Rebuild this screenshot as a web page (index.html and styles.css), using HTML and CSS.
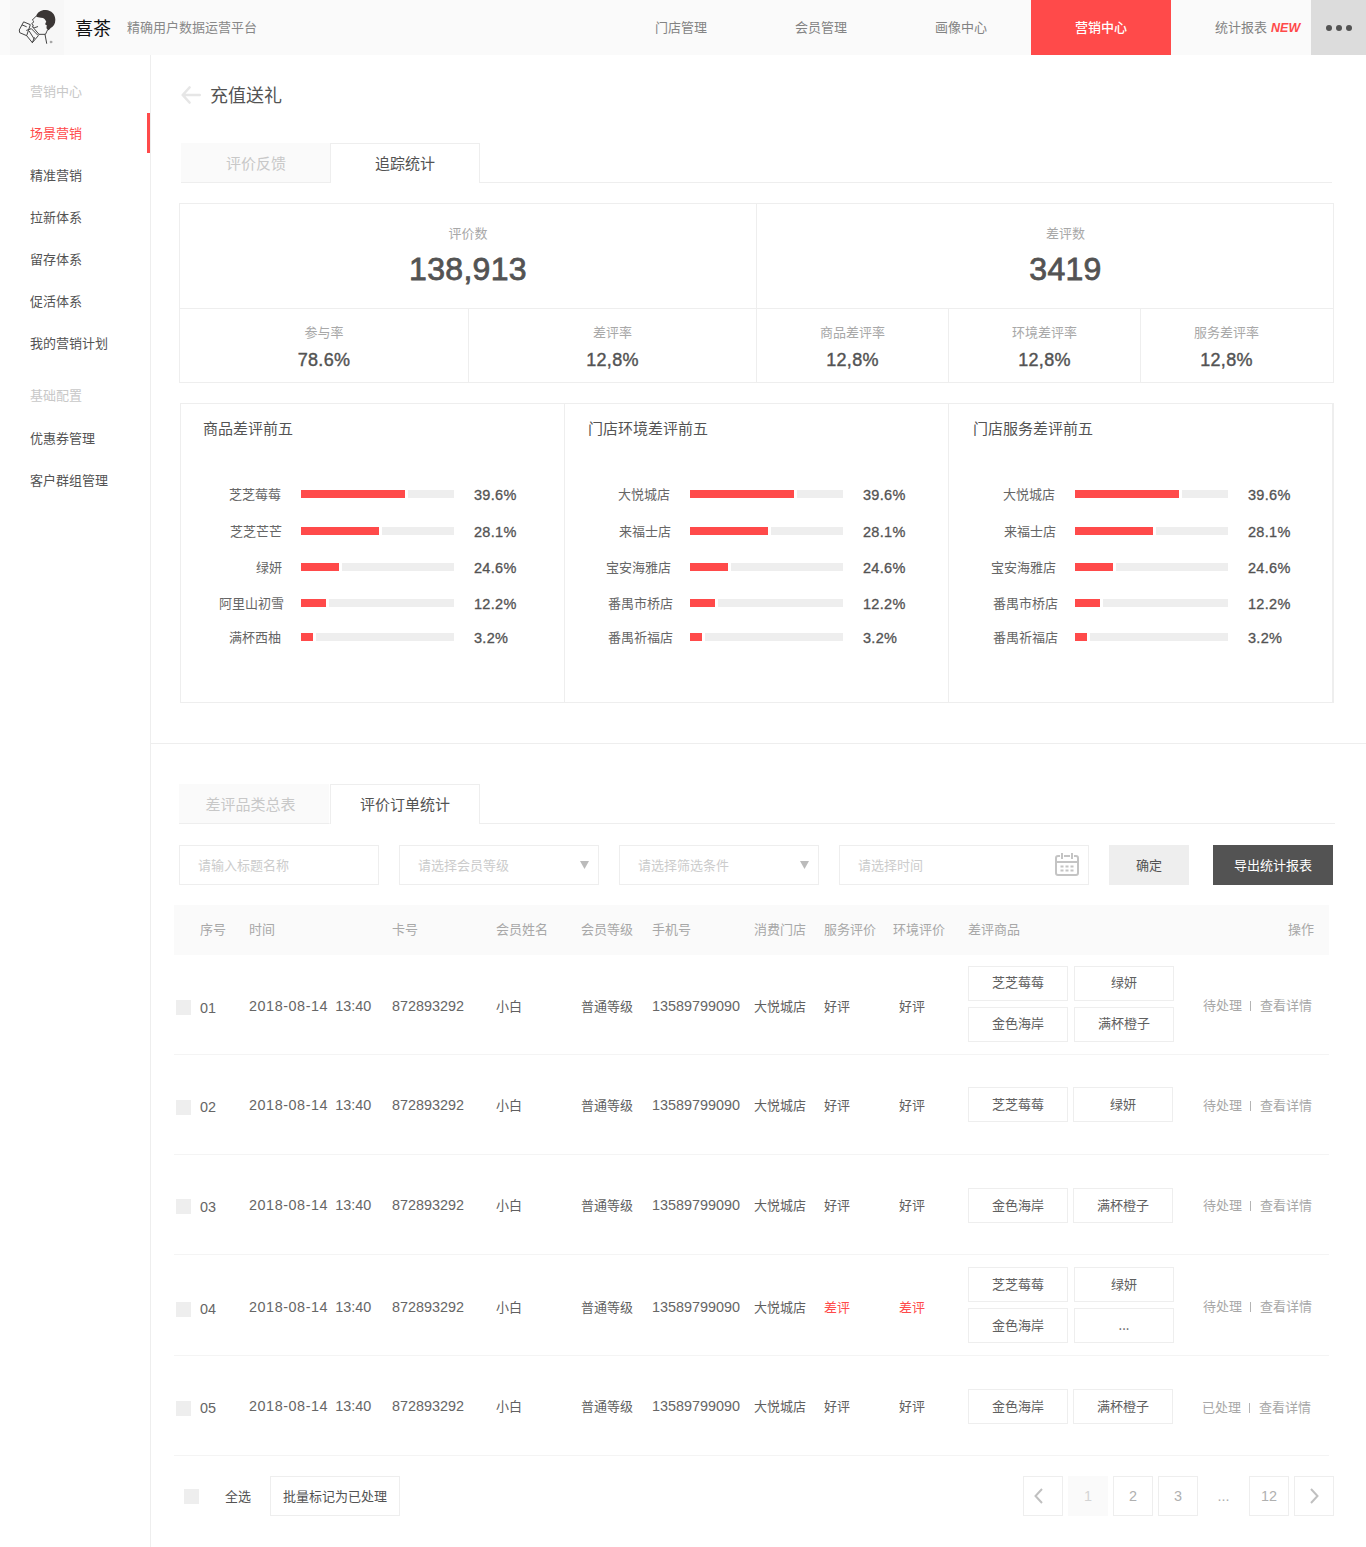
FILE: index.html
```html
<!DOCTYPE html>
<html lang="zh-CN">
<head>
<meta charset="utf-8">
<title>喜茶 精确用户数据运营平台</title>
<link rel="stylesheet" href="styles.css">
</head>
<body>
<header class="topbar">
  <div class="logo">
    <svg viewBox="0 0 162 162" width="54" height="54" fill="none" stroke="#444" stroke-width="3" stroke-linejoin="round" stroke-linecap="round">
      <path d="M78 49C82 36 94 29 108 30C124 31 136 43 136 59C136 72 130 80 122 84L116 91C109 89 108 82 111 76C106 76 104 70 109 66C107 59 102 53 93 53C87 53 82 52 78 49Z" fill="#3b3635" stroke="none"/>
      <path d="M78 49L67 60L72 65L65 71L70 75L67 80L74 83L83 80M112 91C108 98 108 103 105 103H87M105 103L110 130M87 103L69 82M42 66L61 74L50 107L29 98L28 91ZM37 75L49 80M50 107L67 128L85 107L64 86L50 91M58 94L72 116M67 128L73 113"/>
      <circle cx="123" cy="126" r="3" fill="#888" stroke="#aaa" stroke-width="2"/>
    </svg>
  </div>
  <h1 class="brand">喜茶</h1>
  <span class="slogan">精确用户数据运营平台</span>
  <nav class="nav">
    <a>门店管理</a>
    <a>会员管理</a>
    <a>画像中心</a>
    <a class="active">营销中心</a>
    <a class="report">统计报表<em>NEW</em></a>
  </nav>
  <div class="more"><i></i><i></i><i></i></div>
</header>

<div class="layout">
  <aside class="sidebar">
    <div class="heading">营销中心</div>
    <a class="active">场景营销</a>
    <a>精准营销</a>
    <a>拉新体系</a>
    <a>留存体系</a>
    <a>促活体系</a>
    <a>我的营销计划</a>
    <div class="heading second">基础配置</div>
    <a>优惠券管理</a>
    <a>客户群组管理</a>
  </aside>

  <main class="main">
    <section class="overview">
      <div class="page-title">
        <svg width="20" height="18" viewBox="0 0 20 18" fill="none" stroke="#e6e6e6" stroke-width="2.6" stroke-linecap="round" stroke-linejoin="round"><path d="M8.5 1.500L1.700 9L8.500 16.500M2 9H18.700"/></svg>
        <h2>充值送礼</h2>
      </div>

      <div class="tabs">
        <div class="tab">评价反馈</div>
        <div class="tab current">追踪统计</div>
      </div>

      <div class="stats">
        <div class="stats-top">
          <div class="stat"><label>评价数</label><b>138,913</b></div>
          <div class="stat"><label>差评数</label><b>3419</b></div>
        </div>
        <div class="stats-bottom">
          <div class="stat"><label>参与率</label><b>78.6%</b></div>
          <div class="stat"><label>差评率</label><b>12,8%</b></div>
          <div class="stat"><label>商品差评率</label><b>12,8%</b></div>
          <div class="stat"><label>环境差评率</label><b>12,8%</b></div>
          <div class="stat last"><label>服务差评率</label><b>12,8%</b></div>
        </div>
      </div>

      <div class="ranks">
        <div class="rank products">
          <h3>商品差评前五</h3>
          <div class="bars">
            <div class="bar"><span>芝芝莓莓</span><div class="track"><i style="width:104px"></i></div><b>39.6%</b></div>
            <div class="bar"><span>芝芝芒芒</span><div class="track"><i style="width:78px"></i></div><b>28.1%</b></div>
            <div class="bar"><span>绿妍</span><div class="track"><i style="width:38px"></i></div><b>24.6%</b></div>
            <div class="bar"><span>阿里山初雪</span><div class="track"><i style="width:25px"></i></div><b>12.2%</b></div>
            <div class="bar"><span>满杯西柚</span><div class="track"><i style="width:12px"></i></div><b>3.2%</b></div>
          </div>
        </div>
        <div class="rank">
          <h3>门店环境差评前五</h3>
          <div class="bars">
            <div class="bar"><span>大悦城店</span><div class="track"><i style="width:104px"></i></div><b>39.6%</b></div>
            <div class="bar"><span>来福士店</span><div class="track"><i style="width:78px"></i></div><b>28.1%</b></div>
            <div class="bar"><span>宝安海雅店</span><div class="track"><i style="width:38px"></i></div><b>24.6%</b></div>
            <div class="bar"><span>番禺市桥店</span><div class="track"><i style="width:25px"></i></div><b>12.2%</b></div>
            <div class="bar"><span>番禺祈福店</span><div class="track"><i style="width:12px"></i></div><b>3.2%</b></div>
          </div>
        </div>
        <div class="rank services">
          <h3>门店服务差评前五</h3>
          <div class="bars">
            <div class="bar"><span>大悦城店</span><div class="track"><i style="width:104px"></i></div><b>39.6%</b></div>
            <div class="bar"><span>来福士店</span><div class="track"><i style="width:78px"></i></div><b>28.1%</b></div>
            <div class="bar"><span>宝安海雅店</span><div class="track"><i style="width:38px"></i></div><b>24.6%</b></div>
            <div class="bar"><span>番禺市桥店</span><div class="track"><i style="width:25px"></i></div><b>12.2%</b></div>
            <div class="bar"><span>番禺祈福店</span><div class="track"><i style="width:12px"></i></div><b>3.2%</b></div>
          </div>
        </div>
      </div>
    </section>

    <section class="orders">
      <div class="tabs wide">
        <div class="tab">差评品类总表</div>
        <div class="tab current">评价订单统计</div>
      </div>

      <div class="filters">
        <div class="field">请输入标题名称</div>
        <div class="field">请选择会员等级<svg width="9" height="8" viewBox="0 0 9 8"><path d="M0 0H9L4.5 8Z" fill="#bbb"/></svg></div>
        <div class="field">请选择筛选条件<svg width="9" height="8" viewBox="0 0 9 8"><path d="M0 0H9L4.5 8Z" fill="#bbb"/></svg></div>
        <div class="field date">请选择时间
          <svg width="24" height="24" viewBox="0 0 24 24" fill="none" stroke="#c4c4c4" stroke-width="2"><path d="M5 3H3Q1 3 1 5V20Q1 22 3 22H21Q23 22 23 20V5Q23 3 21 3H19M9 3H15M1 9H23M7 0V6M17 0V6"/><path d="M5.500 13.500H8.500M10.500 13.500H13.500M15.500 13.500H18.500M5.500 17.500H8.500M10.500 17.500H13.500M15.500 17.500H18.500"/></svg>
        </div>
        <button class="confirm">确定</button>
        <button class="export">导出统计报表</button>
      </div>

      <div class="table">
        <div class="row head">
          <span></span><span>序号</span><span>时间</span><span>卡号</span><span>会员姓名</span><span>会员等级</span><span>手机号</span><span>消费门店</span><span>服务评价</span><span>环境评价</span><span>差评商品</span><span class="op">操作</span>
        </div>
        <div class="row r1">
          <i class="check"></i><span class="no">01</span><span class="num"><time>2018-08-14</time>13:40</span><span class="num">872893292</span><span>小白</span><span>普通等级</span><span class="num">13589799090</span><span>大悦城店</span><span>好评</span><span class="env">好评</span>
          <div class="tags"><em>芝芝莓莓</em><em>绿妍</em><em>金色海岸</em><em>满杯橙子</em></div>
          <span class="op"><a>待处理</a><s></s><a>查看详情</a></span>
        </div>
        <div class="row r2">
          <i class="check"></i><span class="no">02</span><span class="num"><time>2018-08-14</time>13:40</span><span class="num">872893292</span><span>小白</span><span>普通等级</span><span class="num">13589799090</span><span>大悦城店</span><span>好评</span><span class="env">好评</span>
          <div class="tags single"><em>芝芝莓莓</em><em>绿妍</em></div>
          <span class="op"><a>待处理</a><s></s><a>查看详情</a></span>
        </div>
        <div class="row r3">
          <i class="check"></i><span class="no">03</span><span class="num"><time>2018-08-14</time>13:40</span><span class="num">872893292</span><span>小白</span><span>普通等级</span><span class="num">13589799090</span><span>大悦城店</span><span>好评</span><span class="env">好评</span>
          <div class="tags single"><em>金色海岸</em><em>满杯橙子</em></div>
          <span class="op"><a>待处理</a><s></s><a>查看详情</a></span>
        </div>
        <div class="row r4">
          <i class="check"></i><span class="no">04</span><span class="num"><time>2018-08-14</time>13:40</span><span class="num">872893292</span><span>小白</span><span>普通等级</span><span class="num">13589799090</span><span>大悦城店</span><span class="bad">差评</span><span class="env bad">差评</span>
          <div class="tags"><em>芝芝莓莓</em><em>绿妍</em><em>金色海岸</em><em>...</em></div>
          <span class="op"><a>待处理</a><s></s><a>查看详情</a></span>
        </div>
        <div class="row r5">
          <i class="check"></i><span class="no">05</span><span class="num"><time>2018-08-14</time>13:40</span><span class="num">872893292</span><span>小白</span><span>普通等级</span><span class="num">13589799090</span><span>大悦城店</span><span>好评</span><span class="env">好评</span>
          <div class="tags single"><em>金色海岸</em><em>满杯橙子</em></div>
          <span class="op"><a>已处理</a><s></s><a>查看详情</a></span>
        </div>
      </div>

      <div class="footer">
        <i class="check"></i>
        <span class="all">全选</span>
        <button class="batch">批量标记为已处理</button>
        <div class="pager">
          <a class="prev"><svg width="9" height="16" viewBox="0 0 9 16" fill="none" stroke="#c0c0c0" stroke-width="2"><path d="M8 1L1.500 8L8 15"/></svg></a>
          <a class="on">1</a><a>2</a><a>3</a><span>...</span><a>12</a>
          <a><svg width="9" height="16" viewBox="0 0 9 16" fill="none" stroke="#c0c0c0" stroke-width="2"><path d="M1 1L7.500 8L1 15"/></svg></a>
        </div>
      </div>
    </section>
  </main>
</div>
</body>
</html>
```
FILE: styles.css
```css
* { box-sizing: border-box; margin: 0; padding: 0; }
body {
  font: 400 13px/20px "Noto Sans CJK SC", "Liberation Sans", sans-serif;
  color: #535353;
  background: #fff;
}
h1, h2, h3 { font-weight: 400; }
em, i { font-style: normal; }
svg { display: block; flex: none; }
button { font: inherit; border: 0; height: 40px; }

/* top bar */
.topbar { display: flex; align-items: center; height: 55px; padding-left: 10px; background: #fafafa; }
.logo { width: 54px; height: 55px; background: #f7f7f7; }
.brand { width: 52px; padding: 0 0 1px 11px; font-size: 18px; line-height: 26px; color: #111; }
.slogan { padding: 0 0 2px 11px; color: #888; }
.nav { display: flex; margin-left: auto; }
.nav a { display: flex; align-items: center; justify-content: center; width: 140px; height: 55px; padding-bottom: 2px; color: #838383; }
.nav .active { background: #ff4a4a; color: #fff; font-weight: 500; }
.nav .report { justify-content: flex-start; padding-left: 44px; }
.nav em { margin: 2px 0 0 4px; font: italic 700 12.5px/20px "Liberation Sans", sans-serif; color: #ff4a4a; }
.more { display: flex; align-items: center; justify-content: center; gap: 4px; width: 55px; height: 55px; background: #dcdcdc; }
.more i { width: 6px; height: 6px; border-radius: 50%; background: #535353; }

/* side menu */
.layout { display: flex; }
.sidebar { width: 151px; height: 1492px; padding-top: 15px; border-right: 1px solid #eee; flex: none; }
.sidebar a, .heading { display: flex; align-items: center; height: 42px; padding-left: 30px; }
.heading { color: #c8c8c8; }
.second { margin: 10px 0 1px; }
.sidebar .active { height: 40px; margin: 1px 0; border-right: 3px solid #ff4a4a; color: #ff4a4a; }
.main { width: 1215px; }

/* overview */
.overview { height: 689px; padding: 28px 0 0 28px; border-bottom: 1px solid #eee; }
.page-title { display: flex; align-items: center; gap: 9px; height: 24px; padding-left: 2px; }
.page-title h2 { font-size: 18px; line-height: 24px; padding-bottom: 3px; }
.tabs { display: flex; width: 1151px; height: 40px; margin: 36px 0 0 2px; font-size: 15px; }
.tab { display: flex; align-items: center; justify-content: center; width: 149px; height: 40px; padding-left: 1px; background: #fafafa; border-bottom: 1px solid #eee; color: #c8c8c8; }
.tab.current { width: 150px; padding: 0 0 2px; background: #fff; border: solid #eee; border-width: 1px 1px 0; color: #535353; }
.tabs::after { content: ""; flex: 1; border-bottom: 1px solid #eee; }

.stats { width: 1155px; margin-top: 20px; border: 1px solid #eee; }
.stats-top { display: grid; grid-template-columns: 577px 576px; height: 105px; border-bottom: 1px solid #eee; }
.stats-bottom { display: grid; grid-template-columns: 289px 288px 192px 192px 192px; height: 73px; }
.stat { text-align: center; border-right: 1px solid #eee; }
.stat:last-child { border-right: 0; }
.stat label { display: block; color: #a8a8a8; }
.stat b { display: block; font-family: "Liberation Sans", sans-serif; font-weight: 400; }
.stats-top .stat { padding-top: 19px; }
.stats-top .stat:last-child { padding-left: 41px; }
.stats-top b { font-size: 32px; line-height: 40px; margin-top: 6px; letter-spacing: 0.3px; -webkit-text-stroke: 0.8px #535353; }
.stats-bottom .stat { padding-top: 13px; }
.stats-bottom b { font-size: 18px; line-height: 24px; margin-top: 6px; letter-spacing: 0.3px; -webkit-text-stroke: 0.4px #535353; }
.stats-bottom .last { padding-right: 21px; }

.ranks { display: grid; grid-template-columns: 384px 384px 383px; width: 1154px; height: 300px; margin: 20px 0 0 1px; border: 1px solid #eee; border-right-width: 2px; }
.rank { padding: 13px 0 0 23px; border-right: 1px solid #eee; }
.rank:last-child { border-right: 0; }
.products { padding-left: 22px; }
.services { padding-left: 24px; }
.rank h3 { font-size: 15px; line-height: 22px; }
.bars { display: grid; grid-template-rows: 37px 36px 36px 34px 34px; margin-top: 37px; }
.bar { display: grid; grid-template-columns: 102px 153px 80px; align-items: center; height: 36px; }
.products .bar { grid-template-columns: 98px 153px 80px; }
.bar span { text-align: right; padding-right: 19px; color: #666; }
.bar:nth-child(1) span { padding-right: 20px; }
.bar:nth-child(4) span, .bar:nth-child(5) span { padding-right: 17px; }
.products .bar:nth-child(5) span { padding-right: 20px; }
.bar b { padding: 1px 0 0 20px; font: 400 14.5px/20px "Liberation Sans", sans-serif; letter-spacing: 0.3px; -webkit-text-stroke: 0.3px #535353; }
.bar:nth-child(5) b { padding-top: 2px; }
.track { height: 8px; background: #eee; }
.track i { display: block; height: 8px; background: #ff4a4a; box-sizing: content-box; border-right: 3px solid #fff; }

/* orders */
.orders { padding: 40px 0 0 23px; }
.wide { width: 1156px; margin: 0 0 0 5px; }
.wide .tab:first-child { width: 151px; padding-right: 8px; border-right: 1px solid #fff; }
.filters { display: flex; margin: 21px 0 0 5px; }
.field { display: flex; align-items: center; justify-content: space-between; width: 200px; height: 40px; margin-right: 20px; padding: 0 9px 0 18px; border: 1px solid #eee; color: #ccc; }
.field.date { width: 250px; }
.confirm { width: 80px; background: #eee; color: #535353; }
.export { width: 120px; margin-left: 24px; background: #535353; color: #fff; }

.table { width: 1155px; margin-top: 20px; }
.row {
  display: grid;
  grid-template-columns: 26px 49px 143px 104px 85px 71px 102px 70px 69px 75px 206px 155px;
  align-items: center;
  height: 100px;
  border-bottom: 1px solid #f4f4f4;
  color: #606060;
}
.row > span { white-space: nowrap; padding-top: var(--drop, 0); }
.row.head { height: 50px; padding-bottom: 2px; border: 0; background: #fafafa; color: #a8a8a8; }
.row.head .op { padding-left: 114px; }
.r1 { --drop: 2px; --no-drop: 6px; --op-drop: 0px; --check-drop: 6px; --tags-drop: -2px; }
.r2 { --drop: 0px; --no-drop: 4px; --op-drop: 0px; --check-drop: 6px; }
.r3 { --drop: 0px; --no-drop: 4px; --op-drop: 0px; --check-drop: 4px; --tags-drop: 2px; }
.row.r4 { --drop: 3px; --no-drop: 7px; --op-drop: 2px; --check-drop: 9px; height: 101px; }
.r5 { --drop: 0px; --no-drop: 4px; --op-drop: 3px; --check-drop: 6px; --tags-drop: 2px; }
.check { display: block; width: 15px; height: 15px; background: #eee; }
.row .check { margin: var(--check-drop) 0 0 2px; }
.num, .row .no { font-family: "Liberation Sans", sans-serif; font-size: 14.4px; color: #666; }
.row .no { padding-top: var(--no-drop); }
.num time { margin-right: 7px; letter-spacing: 0.55px; }
.row .env { padding-left: 6px; }
.row .bad { color: #ff4a4a; }
.tags { display: grid; grid-template-columns: 100px 100px; gap: 6px; margin-top: var(--tags-drop, 0); }
.tags.single { gap: 5px; }
.tags em { display: flex; align-items: center; justify-content: center; height: 35px; padding-bottom: 2px; border: 1px solid #eee; }
.row:not(.head) .op { display: flex; align-items: center; padding: var(--op-drop) 0 0 29px; color: #a8a8a8; }
.row.r5 .op { padding-left: 28px; }
.op s { width: 1px; height: 10px; margin: 2px 9px 0 8px; background: #b4b4b4; }

.footer { display: flex; align-items: center; height: 40px; margin-top: 20px; padding-left: 10px; }
.all { margin: 0 19px 0 26px; }
.batch { width: 130px; border: 1px solid #eee; background: #fff; color: #535353; }
.pager { display: flex; gap: 5px; margin-left: 623px; font: 14.4px/20px "Liberation Sans", sans-serif; color: #b0b0b0; }
.pager a, .pager span { display: flex; align-items: center; justify-content: center; width: 40px; height: 40px; border: 1px solid #eee; }
.pager .prev { padding-right: 9px; }
.pager span { width: 41px; border: 0; }
.pager .on { border: 0; background: #fafafa; color: #d4d4d4; }
```
